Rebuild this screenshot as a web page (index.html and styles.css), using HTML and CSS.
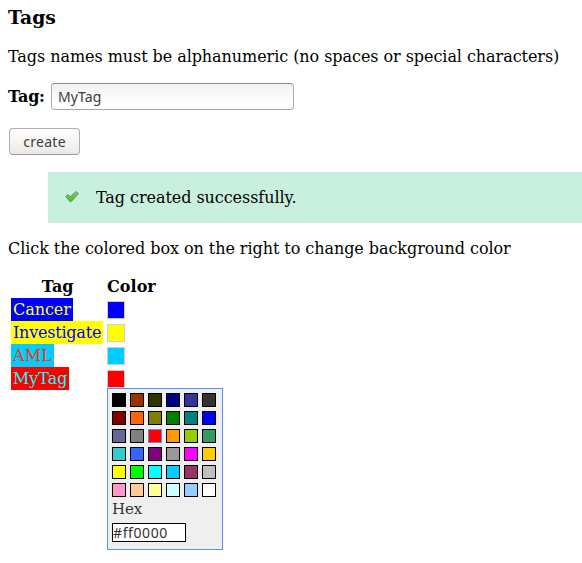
FILE: index.html
```
<!DOCTYPE html>
<html lang="en">
<head>
<meta charset="utf-8">
<title>Tags</title>
<link rel="stylesheet" href="styles.css">
</head>
<body>
<h3>Tags</h3>
<p class="intro">Tags names must be alphanumeric (no spaces or special characters)</p>
<form>
  <div class="field"><label for="tag">Tag:</label><input id="tag" class="tag-input" type="text" value="MyTag" spellcheck="false"></div>
  <button class="create" type="button">create</button>
</form>
<div class="message">
  <svg class="check" width="14" height="12" viewBox="0 0 14 12"><defs><linearGradient id="g" x1="0" y1="0" x2="0" y2="1"><stop offset="0" stop-color="#86c486"/><stop offset="1" stop-color="#48c008"/></linearGradient></defs><path d="M.6 5.5 2.8 3.5 5.5 5.5 11.1.5 13.6 2.6 6.4 10.6H5Z" fill="url(#g)" stroke="#4b9a45" stroke-width=".8" stroke-linejoin="round"/></svg>
  <span>Tag created successfully.</span>
</div>
<p class="hint">Click the colored box on the right to change background color</p>
<div class="tags">
  <div class="head tag-head">Tag</div><div class="head">Color</div>
  <div class="cell"><span class="tag cancer">Cancer</span></div><div class="swatch blue"></div>
  <div class="cell"><span class="tag investigate">Investigate</span></div><div class="swatch yellow"></div>
  <div class="cell"><span class="tag aml">AML</span></div><div class="swatch cyan"></div>
  <div class="cell"><span class="tag mytag">MyTag</span></div>
  <div class="swatch red">
    <div class="picker">
      <div class="palette" id="palette"></div>
      <label class="hex-label" for="hex">Hex</label>
      <input class="hex" id="hex" type="text" value="#ff0000" spellcheck="false">
    </div>
  </div>
</div>
<script src="palette.js"></script>
</body>
</html>
```
FILE: styles.css
```
body {
  box-sizing: border-box;
  min-height: 563px;
  margin: 0;
  padding: 6px 0 0 8px;
  background: #fff;
  color: #000;
  font: 16px/19px "DejaVu Serif", serif;
  letter-spacing: -0.06px;
}
h3 {
  margin: 0 0 19px;
  font-size: 18.72px;
  line-height: 22px;
}
p {
  margin: 0;
  white-space: nowrap;
}
.intro { margin-bottom: 17px; }
.field {
  display: flex;
  align-items: center;
  height: 27px;
  margin-bottom: 18px;
}
.field label {
  width: 43px;
  font-weight: bold;
  letter-spacing: -0.3px;
  white-space: nowrap;
}
.tag-input {
  box-sizing: border-box;
  width: 243px;
  height: 27px;
  margin: 0;
  padding: 0 6px;
  border: 1px solid #aaa;
  border-top-color: #888;
  border-radius: 4px;
  background: linear-gradient(#f1f1f1, #fff 80%);
  color: #3c3c3c;
  font: 14px "Noto Sans", sans-serif;
  letter-spacing: 0.1px;
}
.create {
  display: block;
  box-sizing: border-box;
  width: 71px;
  height: 27px;
  margin: 0 0 17px 1px;
  padding: 0;
  border: 1px solid #b1aeab;
  border-bottom-color: #999;
  border-radius: 4px;
  background: linear-gradient(#fff, #ebe9e7);
  color: #3c3c3c;
  font: 14px "Noto Sans", sans-serif;
  letter-spacing: 0.3px;
}
.message {
  display: flex;
  align-items: center;
  height: 51px;
  margin-left: 40px;
  padding-left: 17px;
  background: #c9f0de;
}
.check {
  margin: 0 17px 2px 0;
}
.hint { margin: 16px 0 19px; }
.tags {
  display: grid;
  grid-template-columns: 92px 50px;
  grid-template-rows: 21px repeat(4, 23px);
  column-gap: 4px;
  margin-left: 3px;
}
.head {
  font-weight: bold;
  letter-spacing: 0.05px;
  white-space: nowrap;
}
.tag-head {
  padding-left: 1px;
  letter-spacing: -0.2px;
  text-align: center;
}
.cell { height: 23px; }
.tag {
  display: inline-block;
  height: 23px;
  padding: 0 2px;
  line-height: 24px;
}
.cancer { background: #00f; color: #ff0; }
.investigate { background: #ff0; color: #00f; letter-spacing: -0.22px; }
.aml { background: #0cf; color: #f30; letter-spacing: 0.15px; }
.mytag { background: #f00; color: #0ff; }
.swatch {
  position: relative;
  box-sizing: border-box;
  width: 18px;
  height: 18px;
  margin-top: 3px;
  border: 1px solid #ccc;
}
.blue { background: #00f; }
.yellow { background: #ff0; }
.cyan { background: #0cf; }
.red { background: #f00; }
.picker {
  position: absolute;
  top: 17px;
  left: -1px;
  box-sizing: border-box;
  width: 116px;
  height: 162px;
  padding: 4px;
  border: 1px solid #598fef;
  background: #efefef;
  color: #333;
}
.palette {
  display: grid;
  grid-template-columns: repeat(6, 14px);
  grid-auto-rows: 14px;
  gap: 4px;
}
.color {
  box-sizing: border-box;
  border: 1px solid #000;
}
.selected { border-color: #598fef; }
.hex-label {
  display: block;
  margin: 3px 0 4px;
  font-size: 15px;
}
.hex {
  display: block;
  box-sizing: border-box;
  width: 74px;
  height: 19px;
  margin: 0;
  padding: 0;
  border: 1px solid #000;
  background: #fff;
  color: #333;
  font: 14px/17px "Noto Sans", sans-serif;
  letter-spacing: 0.6px;
}
```
FILE: palette.js
```
const colors = [
  "000000", "993300", "333300", "000080", "333399", "333333",
  "800000", "ff6600", "808000", "008000", "008080", "0000ff",
  "666699", "808080", "ff0000", "ff9900", "99cc00", "339966",
  "33cccc", "3366ff", "800080", "999999", "ff00ff", "ffcc00",
  "ffff00", "00ff00", "00ffff", "00ccff", "993366", "c0c0c0",
  "ff99cc", "ffcc99", "ffff99", "ccffff", "99ccff", "ffffff"
];
const palette = document.getElementById("palette");
for (const color of colors) {
  const box = document.createElement("div");
  box.className = color === "ff0000" ? "color selected" : "color";
  box.style.backgroundColor = "#" + color;
  palette.append(box);
}
```
